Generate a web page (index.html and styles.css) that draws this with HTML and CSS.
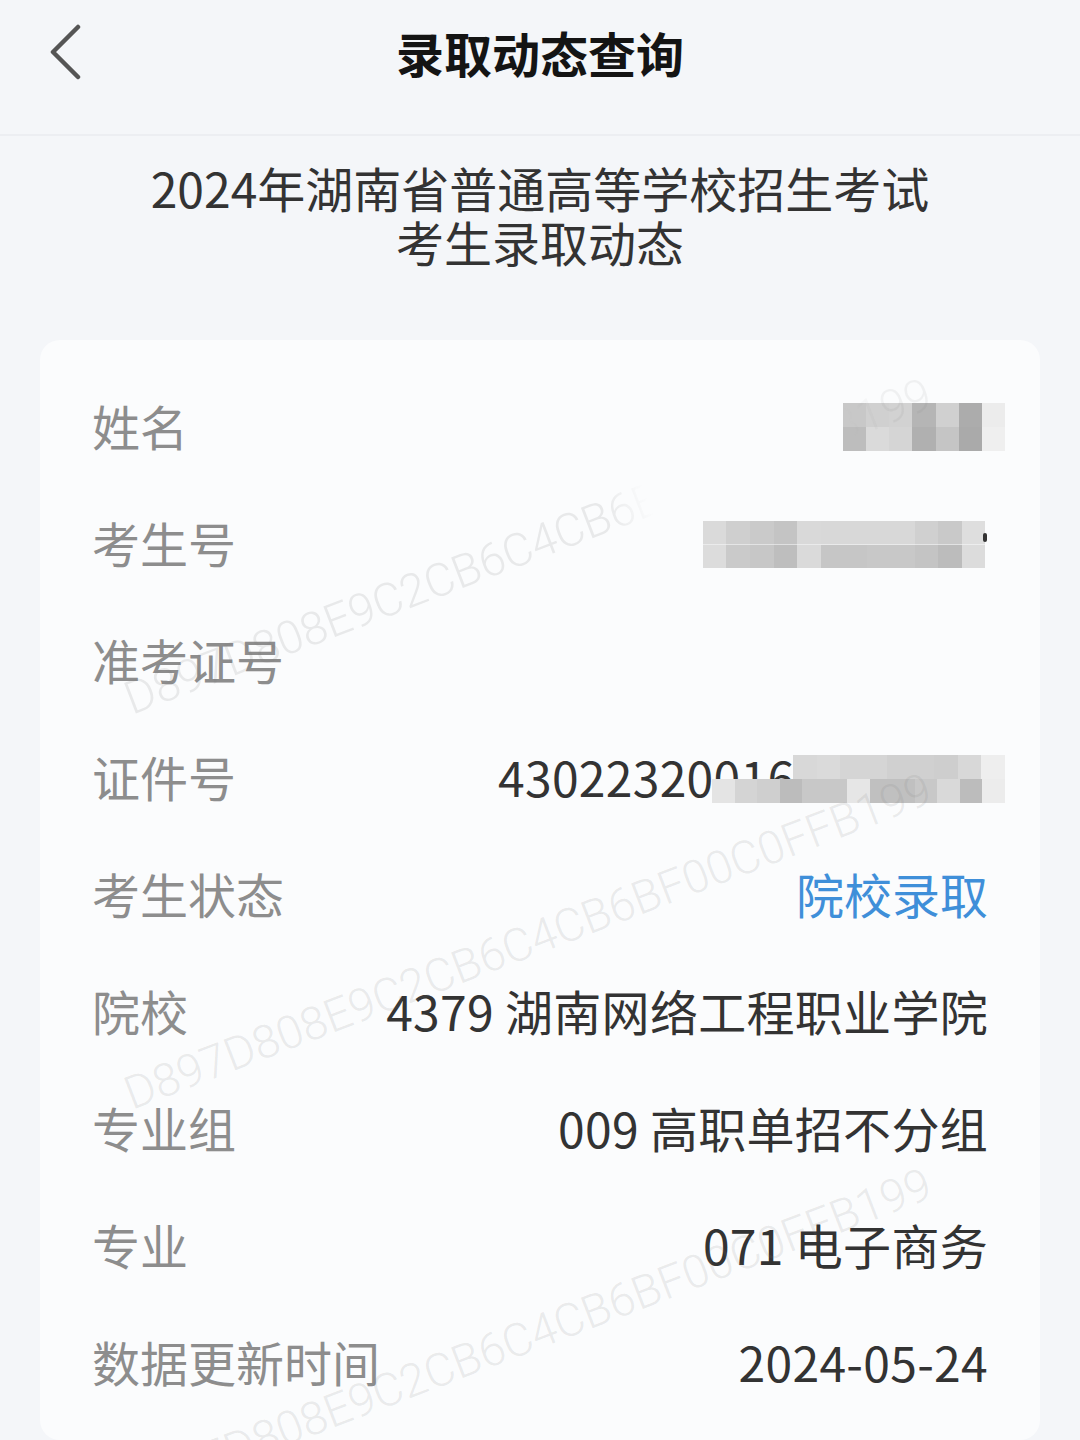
FILE: index.html
```html
<!DOCTYPE html>
<html lang="zh-CN">
<head>
<meta charset="utf-8">
<title>录取动态查询</title>
<link rel="stylesheet" href="styles.css">
</head>
<body>
<div class="page">
  <header class="nav">
    <div class="nav-left">
      <svg class="back" width="34" height="56" viewBox="0 0 34 56" aria-hidden="true">
        <path d="M30 3 L5 28 L30 53" fill="none" stroke="#555" stroke-width="4.5" stroke-linecap="round" stroke-linejoin="round"/>
      </svg>
    </div>
    <h1 class="nav-title">录取动态查询</h1>
    <div class="nav-right"></div>
  </header>

  <div class="subtitle">
    <p>2024年湖南省普通高等学校招生考试</p>
    <p>考生录取动态</p>
  </div>

  <section class="card">
    <div class="row">
      <span class="label">姓名</span>
      <span class="mosaic mosaic-name"></span>
    </div>
    <div class="row">
      <span class="label">考生号</span>
      <span class="mosaic mosaic-ksh"><i class="dot"></i></span>
    </div>
    <div class="row">
      <span class="label">准考证号</span>
      <span class="value"></span>
    </div>
    <div class="row">
      <span class="label">证件号</span>
      <span class="value id-wrap">43022320016<span class="id-top"></span><span class="id-bot"></span></span>
    </div>
    <div class="row">
      <span class="label">考生状态</span>
      <span class="value blue">院校录取</span>
    </div>
    <div class="row">
      <span class="label">院校</span>
      <span class="value">4379 湖南网络工程职业学院</span>
    </div>
    <div class="row">
      <span class="label">专业组</span>
      <span class="value">009 高职单招不分组</span>
    </div>
    <div class="row">
      <span class="label">专业</span>
      <span class="value">071 电子商务</span>
    </div>
    <div class="row">
      <span class="label">数据更新时间</span>
      <span class="value">2024-05-24</span>
    </div>
  </section>

  <div class="wm wm1">D897D808E9C2CB6C4CB6BF00C0FFB199</div>
  <div class="wm wm2">D897D808E9C2CB6C4CB6BF00C0FFB199</div>
  <div class="wm wm3">D897D808E9C2CB6C4CB6BF00C0FFB199</div>
</div>
</body>
</html>
```

FILE: styles.css
```css
* { box-sizing: border-box; }
html, body { margin: 0; padding: 0; }
body {
  background: #f4f6f9;
  font-family: "Noto Sans CJK SC", "Noto Sans", sans-serif;
}
.page {
  position: relative;
  width: 1080px;
  height: 1440px;
  overflow: hidden;
  background: #f4f6f9;
}

/* nav */
.nav {
  height: 136px;
  display: grid;
  grid-template-columns: 1fr auto 1fr;
  align-items: start;
  padding-top: 22px;
  border-bottom: 2px solid #eceef2;
}
.nav-left {
  height: 60px;
  display: flex;
  align-items: center;
  padding-left: 48px;
}
.back { display: block; }
.nav-title {
  margin: 0;
  font-size: 48px;
  line-height: 60px;
  font-weight: 700;
  color: #141414;
}

/* subtitle */
.subtitle {
  padding-top: 24px;
  text-align: center;
  color: #333;
}
.subtitle p {
  margin: 0;
  font-size: 48px;
  line-height: 54px;
}

/* card */
.card {
  margin: 72px 40px 0;
  padding: 26px 52px 0;
  background: #fbfcfd;
  border-radius: 20px;
  min-height: 1100px;
}
.row {
  height: 117px;
  display: flex;
  justify-content: space-between;
  align-items: center;
}
.label {
  font-size: 48px;
  color: #8d8d8d;
  white-space: nowrap;
}
.value {
  font-size: 48px;
  color: #333;
  white-space: nowrap;
  letter-spacing: 0.3px;
}
.value.blue { color: #3f8fd9; letter-spacing: 0; }

/* mosaics */
.mosaic {
  display: block;
  position: relative;
}
.mosaic-name {
  width: 162px;
  height: 48px;
  margin-right: -17px;
  margin-top: 5px;
  background:
    linear-gradient(90deg, #c8c8c8 0 14.29%, #d0d0d0 14.29% 28.57%, #d2d2d2 28.57% 42.86%, #b5b5b5 42.86% 57.14%, #d0d0d0 57.14% 71.43%, #acacac 71.43% 85.71%, #ececec 85.71% 100%) top / 100% 50% no-repeat,
    linear-gradient(90deg, #bdbdbd 0 14.29%, #dadada 14.29% 28.57%, #d5d5d5 28.57% 42.86%, #b0b0b0 42.86% 57.14%, #c5c5c5 57.14% 71.43%, #aaaaaa 71.43% 85.71%, #efefef 85.71% 100%) bottom / 100% 50% no-repeat;
}
.mosaic-ksh {
  width: 282px;
  height: 47px;
  margin-right: 3px;
  margin-top: 6px;
  background:
    linear-gradient(90deg, #dadada 0 8.33%, #cfcfcf 8.33% 16.67%, #cacaca 16.67% 25%, #c4c4c4 25% 33.33%, #d9d9d9 33.33% 41.67%, #d8d8d8 41.67% 75%, #d0d0d0 75% 83.33%, #c9c9c9 83.33% 91.67%, #dedede 91.67% 100%) top / 100% 50% no-repeat,
    linear-gradient(90deg, #dcdcdc 0 8.33%, #cacaca 8.33% 16.67%, #c7c7c7 16.67% 25%, #bebebe 25% 33.33%, #dadada 33.33% 41.67%, #c6c6c6 41.67% 58.33%, #c8c8c8 58.33% 75%, #c4c4c4 75% 83.33%, #bcbcbc 83.33% 91.67%, #dcdcdc 91.67% 100%) bottom / 100% 50% no-repeat;
}
.dot {
  position: absolute;
  right: -2px;
  top: 12px;
  width: 4px;
  height: 9px;
  background: #333;
  border-radius: 2px;
}

.id-wrap {
  position: relative;
  display: block;
  width: 507px;
  height: 56px;
  line-height: 56px;
  margin-right: -17px;
  overflow: hidden;
}
.id-top {
  position: absolute;
  right: 0;
  top: 7px;
  width: 212px;
  height: 24px;
  background: linear-gradient(90deg, #d8d8d8 0 11.1%, #dadada 11.1% 22.2%, #d5d5d5 22.2% 44.4%, #d0d0d0 44.4% 66.7%, #cecece 66.7% 77.8%, #d8d8d8 77.8% 88.9%, #eeeeee 88.9% 100%);
}
.id-bot {
  position: absolute;
  right: 0;
  top: 31px;
  width: 293px;
  height: 24px;
  background: linear-gradient(90deg, #e4e4e4 0 7.69%, #d4d4d4 7.69% 15.38%, #cfcfcf 15.38% 23.08%, #bcbcbc 23.08% 30.77%, #c8c8c8 30.77% 46.15%, #e6e6e6 46.15% 53.85%, #c0c0c0 53.85% 69.23%, #c8c8c8 69.23% 76.92%, #d9d9d9 76.92% 84.62%, #bcbcbc 84.62% 92.31%, #ececec 92.31% 100%);
}

/* watermarks */
.wm {
  position: absolute;
  left: 132px;
  font-family: Roboto, "Liberation Sans", sans-serif;
  font-size: 46px;
  font-weight: 300;
  line-height: 1;
  white-space: nowrap;
  color: rgba(120, 120, 120, 0.14);
  transform-origin: 0 39px;
  transform: rotate(-21deg);
  pointer-events: none;
}
.wm1 {
  top: 676px;
  -webkit-mask-image: linear-gradient(90deg, #000 0 60%, transparent 65% 90%, rgba(0,0,0,0.6) 95%);
  mask-image: linear-gradient(90deg, #000 0 60%, transparent 65% 90%, rgba(0,0,0,0.6) 95%);
}
.wm2 { top: 1071px; }
.wm3 { top: 1466px; }
```
